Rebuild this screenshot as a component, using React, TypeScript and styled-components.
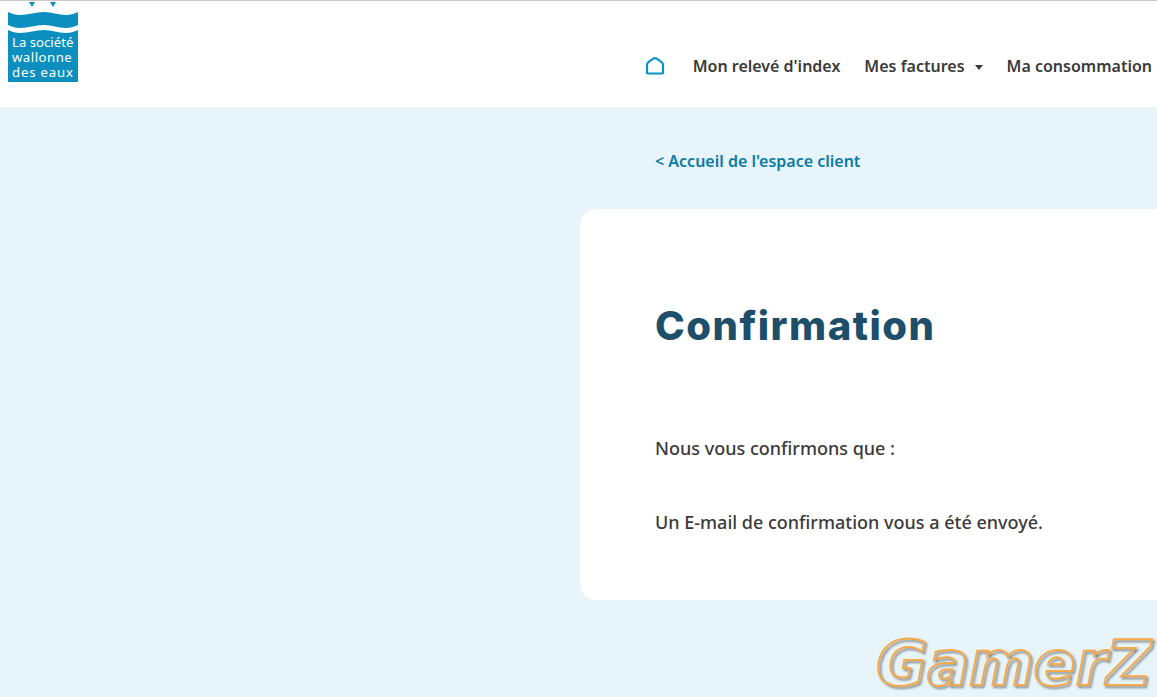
import styled, { createGlobalStyle } from 'styled-components';

const GlobalStyle = createGlobalStyle`
    html, body {
        margin: 0;
        padding: 0;
        height: 100%;
        overflow: hidden;
        background: #e7f5fb;
    }
    body {
        font-family: 'Noto Sans', 'Open Sans', sans-serif;
        color: #3a3a3a;
    }
`;

export default function App() {
    return (
        <Page>
            <GlobalStyle />
            <Header>
                <Logo href="#">
                    <LogoWaves viewBox="0 0 70 34" aria-hidden="true">
                        <path d="M21 1h6l-3 5zM42 1h6l-3 5z" fill="#0b8fbf" />
                        <path
                            d="M0 11C4 13 8 14 12 14C20 14 28 11 36 11C44 11 50 14 58 14C62 14 66 13 70 11V24C66 26 62 27 58 27C50 27 44 24 36 24C28 24 20 27 12 27C8 27 4 26 0 24Z"
                            fill="#0b8fbf"
                        />
                        <path
                            d="M0 29C4 31 8 32 12 32C20 32 28 29 36 29C44 29 50 32 58 32C62 32 66 31 70 29V34H0Z"
                            fill="#0b8fbf"
                        />
                    </LogoWaves>
                    <LogoText>
                        <LogoLine>La société</LogoLine>
                        <LogoLine $spacing={0.5}>wallonne</LogoLine>
                        <LogoLine $spacing={0.8}>des eaux</LogoLine>
                    </LogoText>
                </Logo>
                <Nav>
                    <HomeLink href="#" aria-label="Accueil">
                        <svg width="20" height="18" viewBox="0 0 20 18" fill="none">
                            <path
                                d="M2 17V8C2 6.500 3 5.500 4 4.700L8 1.800Q10 .5 12 1.800L16 4.700C17 5.500 18 6.500 18 8V17M2 16.500H18"
                                stroke="#0f93c4"
                                strokeWidth="2.200"
                            />
                        </svg>
                    </HomeLink>
                    <NavLink href="#">Mon relevé d'index</NavLink>
                    <NavLink href="#">
                        Mes factures
                        <Caret />
                    </NavLink>
                    <NavLink href="#">Ma consommation</NavLink>
                </Nav>
            </Header>
            <Main>
                <BackLink href="#">&lt; Accueil de l'espace client</BackLink>
                <Card>
                    <Title>Confirmation</Title>
                    <Message>Nous vous confirmons que :</Message>
                    <Message>Un E-mail de confirmation vous a été envoyé.</Message>
                </Card>
            </Main>
            <Watermark>GamerZ</Watermark>
        </Page>
    );
}

const Page = styled.div`
    position: relative;
    width: 1157px;
    height: 697px;
    overflow: hidden;
    background: #e7f5fb;
`;

const Header = styled.header`
    display: flex;
    justify-content: space-between;
    box-sizing: border-box;
    height: 107px;
    padding-left: 8px;
    background: #fff;
    border-top: 1px solid #c8c8c8;
`;

const Logo = styled.a`
    display: flex;
    flex-direction: column;
    width: 70px;
    height: 81px;
    text-decoration: none;
`;

const LogoWaves = styled.svg`
    display: block;
    width: 70px;
    height: 34px;
    flex: none;
`;

const LogoText = styled.div`
    flex: 1;
    display: flex;
    flex-direction: column;
    padding-left: 4px;
    background: #0b8fbf;
    color: #fff;
    font-size: 13.200px;
`;

const LogoLine = styled.div<{ $spacing?: number }>`
    height: 15px;
    letter-spacing: ${({ $spacing }) => $spacing ?? 0}px;
    line-height: 15px;
    white-space: nowrap;
`;

const Nav = styled.nav`
    display: flex;
    align-items: center;
    gap: 24px;
    height: 130px;
    margin-right: 5px;
    align-self: flex-start;
`;

const HomeLink = styled.a`
    display: flex;
    margin-right: 4px;
`;

const NavLink = styled.a`
    display: flex;
    align-items: center;
    color: #3a3a3a;
    font-size: 16px;
    font-weight: 600;
    line-height: 22px;
    text-decoration: none;
    white-space: nowrap;
`;

const Caret = styled.span`
    width: 0;
    height: 0;
    margin-left: 10px;
    margin-top: 3px;
    border-top: 5.500px solid #3a3a3a;
    border-left: 4.700px solid transparent;
    border-right: 4.700px solid transparent;
`;

const Main = styled.main`
    display: flex;
    flex-direction: column;
    align-items: flex-start;
    padding: 43px 0 0 580px;
`;

const BackLink = styled.a`
    margin-left: 75px;
    color: #0b7ba5;
    font-size: 16px;
    font-weight: 600;
    line-height: 22px;
    text-decoration: none;
`;

const Card = styled.section`
    box-sizing: border-box;
    width: 620px;
    height: 391px;
    margin-top: 37px;
    padding: 90px 0 0 75px;
    background: #fff;
    border-radius: 16px;
`;

const Title = styled.h1`
    margin: 0 0 84px;
    color: #1d4f6b;
    font-family: 'Inter', sans-serif;
    font-size: 40px;
    font-weight: 800;
    letter-spacing: 1.500px;
    line-height: 54px;
`;

const Message = styled.p`
    margin: 0 0 52px;
    color: #3a3a3a;
    font-size: 18px;
    font-weight: 500;
    line-height: 22px;
`;

const Watermark = styled.div`
    position: absolute;
    left: 876px;
    top: 629px;
    color: transparent;
    font-family: 'DejaVu Sans', sans-serif;
    font-size: 62px;
    font-style: italic;
    font-weight: 700;
    line-height: 70px;
    -webkit-text-stroke: 2px #f5a94a;
    filter: drop-shadow(2px 2px 1px rgba(80, 80, 80, 0.7));
`;
